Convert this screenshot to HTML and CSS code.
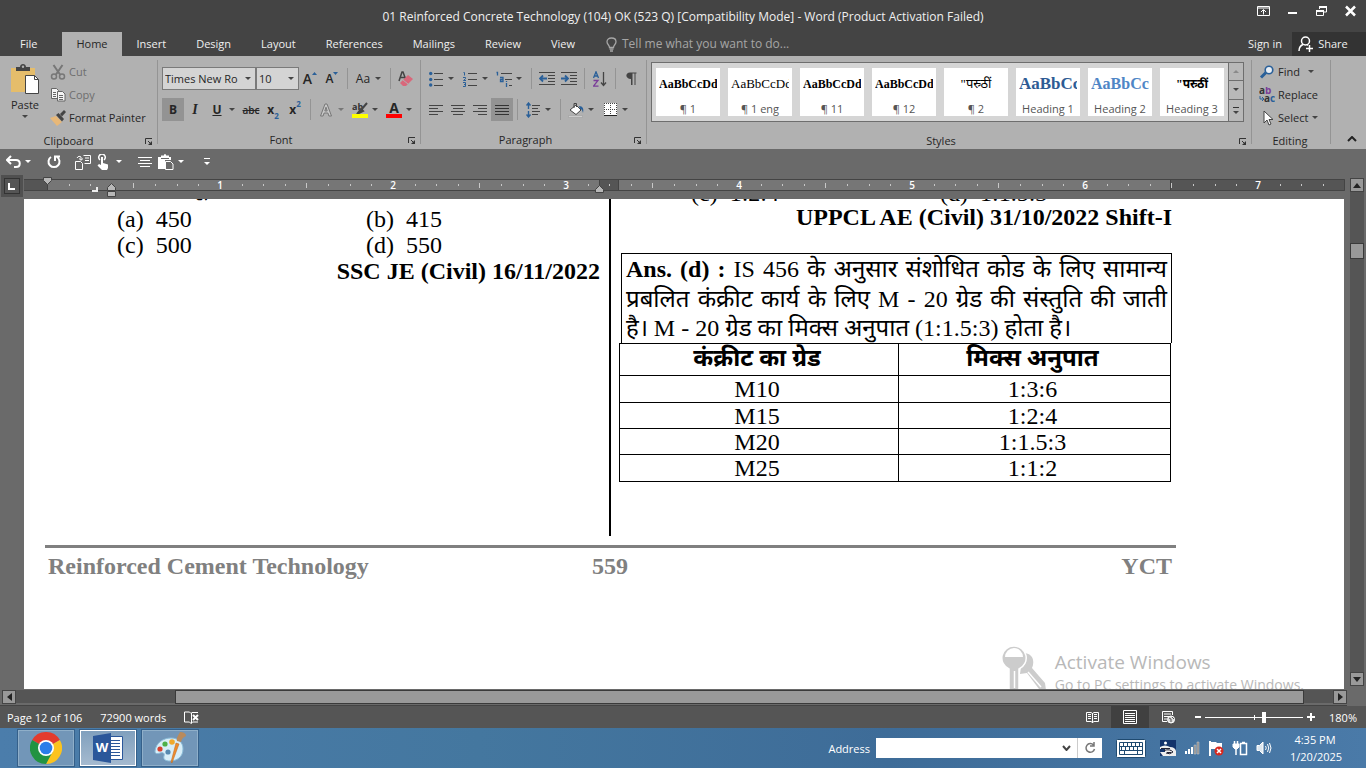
FILE: index.html
```html
<!DOCTYPE html>
<html lang="en">
  <head>
    <meta charset="UTF-8" />
    <meta name="viewport" content="width=device-width, initial-scale=1.0" />
    <title>01 Reinforced Concrete Technology (104) OK (523 Q) - Word</title>
    <link rel="stylesheet" href="styles.css">
  </head>
  <body>
    <header class="titlebar">
      <h1 class="title">01 Reinforced Concrete Technology (104) OK (523 Q) [Compatibility Mode] - Word (Product Activation Failed)</h1>
      <div class="window-controls">
        <button type="button" aria-label="Ribbon Display Options">
          <svg width="14" height="12" viewBox="0 0 14 12" fill="none" stroke="#fff"><path d="M.5 1.5h12v9H.5zM.5 3h12M6.500 9.500V5M4 7l2.500-2.500L9 7" /></svg>
        </button>
        <button type="button" aria-label="Minimize">
          <svg width="14" height="12" viewBox="0 0 14 12"><path d="M2 7h9v2H2z" fill="#fff" /></svg>
        </button>
        <button type="button" aria-label="Restore Down">
          <svg width="14" height="12" viewBox="0 0 14 12" fill="none" stroke="#fff"><path d="M4.500 4V2h7v5H9M1.500 5.500h7v5h-7z" /><path d="M4 2h8M1 6h8" stroke-width="2" /></svg>
        </button>
        <button type="button" aria-label="Close">
          <svg width="14" height="12" viewBox="0 0 14 12"><path d="M2 1.500l9 9M11 1.500l-9 9" stroke="#fff" stroke-width="2.500" /></svg>
        </button>
      </div>
    </header>

    <nav class="tabs">
      <a href="#" class="file">File</a>
      <a href="#" class="active">Home</a>
      <a href="#">Insert</a>
      <a href="#">Design</a>
      <a href="#">Layout</a>
      <a href="#">References</a>
      <a href="#">Mailings</a>
      <a href="#">Review</a>
      <a href="#">View</a>
      <button type="button" class="tell-me">
        <svg width="11" height="15" viewBox="0 0 11 15" fill="none" stroke="#a6a6a6" stroke-width="1.300"><path d="M3.500 10.500C3.500 8 1 7.500 1 4.800 1 2.500 3 1 5.500 1S10 2.500 10 4.800c0 2.700-2.500 3.200-2.500 5.700zM3.500 12.200h4M4 14h3" /></svg>
        Tell me what you want to do...
      </button>
      <div class="account">
        <a href="#">Sign in</a>
        <button type="button" class="share">
          <svg width="16" height="16" viewBox="0 0 16 16" fill="none" stroke="#fff" stroke-width="1.500"><circle cx="7.500" cy="5" r="4" /><path d="M1 15c0-3.500 1.500-5.500 4-6.500M9 8.500l1 .8M8 12.500h7M11.500 9v7" /></svg>
          Share
        </button>
      </div>
    </nav>

    <section class="ribbon">
      <div class="group clipboard">
        <div class="group-body">
          <button type="button" class="paste">
            <svg width="30" height="30" viewBox="0 0 30 30"><path d="M1 4h24v24H1z" fill="#e5bd6b" /><path d="M6 7V3h4c0-4 6-4 6 0h4v4z" fill="#444" /><circle cx="13" cy="2.800" r="1.200" fill="#b1b1b1" /><path d="M15.500 11.500h9l4 4v14h-13z" fill="#fff" stroke="#444" /><path d="M24.500 11.500v4h4" fill="none" stroke="#444" /></svg>
            Paste
            <i class="dd"></i>
          </button>
          <div class="commands">
            <button type="button" class="off">
              <svg width="16" height="16" viewBox="0 0 16 16" fill="none" stroke="#777"><path d="M3.500 1l6.500 9.500M12.500 1L6 10.500" stroke-width="2" /><circle cx="4" cy="12.500" r="2.500" stroke-width="1.500" /><circle cx="12" cy="12.500" r="2.500" stroke-width="1.500" /></svg>
              Cut
            </button>
            <button type="button" class="off">
              <svg width="16" height="16" viewBox="0 0 16 16" fill="#f4f4f4" stroke="#666"><path d="M1.500 1.500h5l2 2v8h-7z" /><path d="M3 5.500h3M3 7.500h3M3 9.500h3" /><path d="M7.500 4.500h5l2.500 2.500v7h-7.500z" /><path d="M9 8.500h4M9 10.500h4M9 12.500h4" /></svg>
              Copy
            </button>
            <button type="button">
              <svg width="16" height="16" viewBox="0 0 16 16"><path d="M0 8l6-2 6 6-5 4z" fill="#e8b878" /><path d="M6 5l2.500-2 5.500 6-2 2.500z" fill="#444" /><path d="M10 4l4-4 2 2-4 4.500z" fill="#444" /></svg>
              Format Painter
            </button>
          </div>
        </div>
        <div class="group-name">Clipboard <svg class="launcher" width="8" height="8" viewBox="0 0 8 8"><path d="M.5 6V.500H7M3 3l3 3" fill="none" stroke="#333" /><path d="M7 3v4H3z" fill="#333" /></svg></div>
      </div>

      <div class="group font">
        <div class="group-body rows">
          <div class="row">
            <label class="combo combo-font"><select aria-label="Font"><option>Times New Ro</option></select></label>
            <label class="combo combo-size"><select aria-label="Font Size"><option>10</option></select></label>
            <button type="button" class="tool" aria-label="Increase Font Size"><span class="grow">A</span><svg width="5" height="14" viewBox="0 0 5 14"><path d="M0 3l2.500-3L5 3z" fill="#2a6099" /></svg></button>
            <button type="button" class="tool" aria-label="Decrease Font Size"><span class="shrink">A</span><svg width="5" height="14" viewBox="0 0 5 14"><path d="M0 0l2.500 3L5 0z" fill="#2a6099" /></svg></button>
            <i class="sep"></i>
            <button type="button" class="tool case">Aa</button><i class="dd"></i>
            <i class="sep"></i>
            <button type="button" class="tool" aria-label="Clear All Formatting">
              <svg width="16" height="16" viewBox="0 0 16 16"><path d="M1 10l3-9h1l3 8M2.500 6.500H7" fill="none" stroke="#444" stroke-width="1.500" /><path d="M3 11l7-7 5 4-7 7-3 0-3-3z" fill="#d9687b" /><path d="M5 9l5 4" stroke="#b1b1b1" /></svg>
            </button>
          </div>
          <div class="row">
            <button type="button" class="tool on"><b>B</b></button>
            <button type="button" class="tool italic">I</button>
            <button type="button" class="tool underline">U</button><i class="dd"></i>
            <button type="button" class="tool strike">abc</button>
            <button type="button" class="tool script">x<sub>2</sub></button>
            <button type="button" class="tool script">x<sup>2</sup></button>
            <i class="sep"></i>
            <button type="button" class="tool" aria-label="Text Effects">
              <svg width="14" height="16" viewBox="0 0 14 16"><path d="M1.500 14L6 2h2l4.500 12h-2.600l-1-3H5.100l-1 3zM5.800 9h2.400L7 5.200z" fill="#c8c8c8" stroke="#777" /></svg>
            </button><i class="dd pale"></i>
            <button type="button" class="tool swatch yellow" aria-label="Text Highlight Color">
              <svg width="16" height="12" viewBox="0 0 16 12"><text x="0" y="8" font-size="9" font-weight="bold" fill="#333">ab</text><path d="M15 1l-6 7M9 7l-4 5 6-3z" stroke="#444" stroke-width="2" fill="#444" /></svg>
            </button><i class="dd"></i>
            <button type="button" class="tool swatch red"><b>A</b></button><i class="dd"></i>
          </div>
        </div>
        <div class="group-name">Font <svg class="launcher" width="8" height="8" viewBox="0 0 8 8"><path d="M.5 6V.500H7M3 3l3 3" fill="none" stroke="#333" /><path d="M7 3v4H3z" fill="#333" /></svg></div>
      </div>

      <div class="group paragraph">
        <div class="group-body rows">
          <div class="row">
            <button type="button" class="tool" aria-label="Bullets">
              <svg width="14" height="16" viewBox="0 0 14 16"><path d="M5 2.500h9M5 8.500h9M5 14.500h9" stroke="#444" /><g fill="#2a6099"><circle cx="1.700" cy="2.500" r="1.700" /><circle cx="1.700" cy="8.500" r="1.700" /><circle cx="1.700" cy="14" r="1.700" /></g></svg>
            </button><i class="dd"></i>
            <button type="button" class="tool" aria-label="Numbering">
              <svg width="14" height="16" viewBox="0 0 14 16"><path d="M5 2.500h9M5 8.500h9M5 14.500h9" stroke="#444" /><path d="M.5 1.500h1v3M0 6.500h2.500v1.200L.5 9.500h2.500M0 11.500h2.500v4H0M1 13.500h1.500" fill="none" stroke="#2a6099" /></svg>
            </button><i class="dd"></i>
            <button type="button" class="tool" aria-label="Multilevel List">
              <svg width="16" height="16" viewBox="0 0 16 16"><path d="M5 2.500h11M9 8.500h7M13 14.500h3" stroke="#444" /><path d="M.5 1.500h1v3M4 6.500h3v4H4.500v-2H7M10.500 10v1M10.500 12v4" fill="none" stroke="#2a6099" stroke-width="1.300" /></svg>
            </button><i class="dd"></i>
            <i class="sep"></i>
            <button type="button" class="tool" aria-label="Decrease Indent">
              <svg width="16" height="14" viewBox="0 0 16 14"><path d="M0 .500h16M9 3.500h7M9 6.500h7M9 9.500h7M0 12.500h16" stroke="#444" /><path d="M1 6.500h7M4 3.500l-3 3 3 3" fill="none" stroke="#2a6099" stroke-width="1.800" /></svg>
            </button>
            <button type="button" class="tool" aria-label="Increase Indent">
              <svg width="16" height="14" viewBox="0 0 16 14"><path d="M0 .500h16M9 3.500h7M9 6.500h7M9 9.500h7M0 12.500h16" stroke="#444" /><path d="M0 6.500h7M4 3.500l3 3-3 3" fill="none" stroke="#2a6099" stroke-width="1.800" /></svg>
            </button>
            <i class="sep"></i>
            <button type="button" class="tool" aria-label="Sort">
              <svg width="14" height="16" viewBox="0 0 14 16" fill="none"><path d="M.5 7L3 .800 5.500 7M1.500 5h3" stroke="#2a6099" stroke-width="1.300" /><path d="M.5 9.500H5L.5 15.200H5.500" stroke="#7a3d99" stroke-width="1.300" /><path d="M10.500 1v13M8 11.500l2.500 3 2.500-3" stroke="#444" stroke-width="1.300" /></svg>
            </button>
            <i class="sep"></i>
            <button type="button" class="tool" aria-label="Show paragraph marks">
              <svg width="11" height="13" viewBox="0 0 11 13"><path d="M5 7C-1 7-1 .500 4 .500h6.500v1H9.500V13h-1V1.500H6.500V13H5z" fill="#444" /></svg>
            </button>
          </div>
          <div class="row">
            <button type="button" class="tool" aria-label="Align Left"><svg width="14" height="12" viewBox="0 0 14 12"><path d="M0 1.500h14M0 4.500h9M0 7.500h14M0 10.500h9" stroke="#444" /></svg></button>
            <button type="button" class="tool" aria-label="Center"><svg width="14" height="12" viewBox="0 0 14 12"><path d="M0 1.500h14M2 4.500h10M0 7.500h14M2 10.500h10" stroke="#444" /></svg></button>
            <button type="button" class="tool" aria-label="Align Right"><svg width="14" height="12" viewBox="0 0 14 12"><path d="M0 1.500h14M5 4.500h9M0 7.500h14M5 10.500h9" stroke="#444" /></svg></button>
            <button type="button" class="tool on" aria-label="Justify"><svg width="14" height="12" viewBox="0 0 14 12"><path d="M0 1.500h14M0 4.500h14M0 7.500h14M0 10.500h14" stroke="#333" /></svg></button>
            <i class="sep"></i>
            <button type="button" class="tool" aria-label="Line Spacing">
              <svg width="14" height="16" viewBox="0 0 14 16" fill="none"><path d="M6 3.500h8M6 6.500h6M6 9.500h8M6 12.500h6" stroke="#444" /><path d="M2.500 1v6M.5 3.500l2-2.500 2 2.500M2.500 9v6M.5 12.500l2 2.500 2-2.500" stroke="#2a6099" stroke-width="1.400" /></svg>
            </button><i class="dd"></i>
            <i class="sep"></i>
            <button type="button" class="tool" aria-label="Shading">
              <svg width="16" height="16" viewBox="0 0 16 16"><path d="M2 8l6-5 5 5-5 4.500z" fill="#fff" stroke="#444" /><path d="M6 6V1.500h2.500V5" fill="none" stroke="#444" /><path d="M11 4c4 0 5 3 4 7-1-3-1-4-3-4z" fill="#2a6099" /><path d="M.5 13.500h14v2H.500z" fill="#ccc" stroke="#999" stroke-width=".500" /></svg>
            </button><i class="dd"></i>
            <button type="button" class="tool" aria-label="Borders">
              <svg width="13" height="13" viewBox="0 0 13 13"><path d="M0 0h13v13H0z" fill="#fff" /><path d="M0 .500h13M0 6.500h13M.5 0v12M6.500 0v12M12.500 0v12" stroke="#444" stroke-dasharray="1 1" /><path d="M0 12.500h13" stroke="#222" /></svg>
            </button><i class="dd"></i>
          </div>
        </div>
        <div class="group-name">Paragraph <svg class="launcher" width="8" height="8" viewBox="0 0 8 8"><path d="M.5 6V.500H7M3 3l3 3" fill="none" stroke="#333" /><path d="M7 3v4H3z" fill="#333" /></svg></div>
      </div>

      <div class="group styles">
        <div class="group-body gallery">
          <div class="gallery-items">
            <button type="button" class="style"><span class="preview bold">AaBbCcDd</span>¶ 1</button>
            <button type="button" class="style"><span class="preview">AaBbCcDd</span>¶ 1 eng</button>
            <button type="button" class="style"><span class="preview bold">AaBbCcDd</span>¶ 11</button>
            <button type="button" class="style"><span class="preview bold">AaBbCcDd</span>¶ 12</button>
            <button type="button" class="style"><span class="preview hindi">"पस्र्ठीं</span>¶ 2</button>
            <button type="button" class="style"><span class="preview heading1">AaBbCc</span>Heading 1</button>
            <button type="button" class="style"><span class="preview heading2">AaBbCc</span>Heading 2</button>
            <button type="button" class="style"><span class="preview hindi bold">"पस्र्ठीं</span>Heading 3</button>
          </div>
          <div class="gallery-nav">
            <button type="button" aria-label="Previous row"><i class="dd up"></i></button>
            <button type="button" aria-label="Next row"><i class="dd"></i></button>
            <button type="button" aria-label="More styles"><i class="dd more"></i></button>
          </div>
        </div>
        <div class="group-name">Styles <svg class="launcher" width="8" height="8" viewBox="0 0 8 8"><path d="M.5 6V.500H7M3 3l3 3" fill="none" stroke="#333" /><path d="M7 3v4H3z" fill="#333" /></svg></div>
      </div>

      <div class="group editing">
        <div class="group-body commands">
          <button type="button">
            <svg width="16" height="14" viewBox="0 0 16 14"><path d="M2 12.500l5-5" stroke="#2a6099" stroke-width="3" /><circle cx="10" cy="5" r="3.800" fill="#e8eef5" stroke="#2a6099" stroke-width="1.600" /></svg>
            Find <i class="dd find"></i>
          </button>
          <button type="button">
            <svg width="16" height="16" viewBox="0 0 16 16" font-size="10" font-weight="bold"><text x="0" y="7" fill="#333">a<tspan fill="#7a3d99">b</tspan></text><text x="5" y="15" fill="#333">a<tspan fill="#2a6099">c</tspan></text><path d="M1 9v3h3M3 10l2 2-2 2" fill="none" stroke="#2a6099" /></svg>
            Replace
          </button>
          <button type="button">
            <svg width="16" height="16" viewBox="0 0 16 16"><path d="M5 1v12l3-3 2 5 2-1-2-4.500h4z" fill="#fff" stroke="#444" /></svg>
            Select <i class="dd"></i>
          </button>
        </div>
        <div class="group-name">Editing</div>
      </div>
      <button type="button" class="collapse" aria-label="Collapse the Ribbon">
        <svg width="10" height="6" viewBox="0 0 10 6"><path d="M1 5l4-4 4 4" fill="none" stroke="#222" stroke-width="2" /></svg>
      </button>
    </section>

    <div class="quick">
      <button type="button" aria-label="Undo"><svg width="15" height="14" viewBox="0 0 15 14" fill="none" stroke="#fff" stroke-width="2"><path d="M1 5h9c5 0 5 7 0 7H8M5 1L1 5l4 4" /></svg></button><i class="dd"></i>
      <button type="button" class="repeat" aria-label="Repeat"><svg width="14" height="14" viewBox="0 0 14 14" fill="none" stroke="#fff" stroke-width="2"><path d="M4 2a5.500 5.500 0 1 0 6 0M8 6V1.500h5" /></svg></button>
      <button type="button" aria-label="Send to document"><svg width="16" height="16" viewBox="0 0 16 16" fill="none" stroke="#fff"><path d="M.5 7.500h5l2 2v6h-7zM8.500 1.500h7v8h-6M10 4h4M10 6.500h4M2 4c1-2 3-2 4-1v3M4 4.500l2 1.800 2-1.800" /></svg></button>
      <button type="button" aria-label="Touch/Mouse Mode"><svg width="14" height="16" viewBox="0 0 14 16"><path d="M3 6a3.300 3.300 0 1 1 4 0" fill="none" stroke="#fff" stroke-width="1.500" /><path d="M4 3h2v6l5 1.500V14l-1 2H5l-4.500-4.500L2 10l2 1z" fill="#fff" /></svg></button><i class="dd"></i>
      <button type="button" aria-label="Center"><svg width="14" height="12" viewBox="0 0 14 12"><path d="M0 1.500h14M2 4.500h10M0 7.500h14M2 10.500h10" stroke="#fff" /></svg></button>
      <button type="button" aria-label="Paste"><svg width="16" height="16" viewBox="0 0 16 16"><path d="M0 3h3V1.500h3C6-.500 8-.500 8 1.500h3V3h2v3H7v9H0z" fill="#fff" /><path d="M3 4.500h8" stroke="#666" /><path d="M7.500 7.500h5l2.500 2.500v5.500H7.500z" fill="#6a6a6a" stroke="#fff" /></svg></button><i class="dd"></i>
      <button type="button" aria-label="Customize Quick Access Toolbar"><i class="dd more"></i></button>
    </div>

    <main class="workspace">
      <div class="editor">
        <div class="ruler">
          <button type="button" class="tab-stop" aria-label="Left Tab"><svg width="8" height="7" viewBox="0 0 8 7"><path d="M1 0v6h6" fill="none" stroke="#fff" stroke-width="2" /></svg></button>
          <svg class="scale" width="100%" height="25">
            <defs>
              <pattern id="inch" x="23" y="0" width="173" height="25" patternUnits="userSpaceOnUse">
                <path d="M22.500 10v2M43.500 10v2M65.500 10v2M108.500 10v2M130.500 10v2M151.500 10v2M86.500 9v5" stroke="#c8c8c8" />
              </pattern>
            </defs>
            <path d="M0 5h2000v12H0z" fill="#555" />
            <path d="M23 5h552v12H23zM595 5h551v12H595z" fill="#767676" />
            <path d="M0 5.500h1320.500v11H0M23.500 5v12M575.500 5v12M594.500 5v12M1146.500 5v12" fill="none" stroke="#444" />
            <path d="M24 5h1296v12H24z" fill="url(#inch)" />
            <g class="numbers"><text x="196" y="15">1</text><text x="369" y="15">2</text><text x="542" y="15">3</text><text x="715" y="15">4</text><text x="888" y="15">5</text><text x="1061" y="15">6</text><text x="1234" y="15">7</text></g>
            <path d="M19.500 3.500h8v3l-4 4-4-4z" fill="#b8b8b8" stroke="#444" />
            <path d="M83.500 16.500v-3l4-4 4 4v3zM83.500 17.500h8v5h-8zM571.500 18.500v-3l4-4 4 4v3z" fill="#b8b8b8" stroke="#444" />
            <path d="M68 17h5v-4" fill="none" stroke="#eee" stroke-width="2" />
          </svg>
        </div>

        <div class="document">
          <article class="paper">
            <div class="columns">
              <section class="column left" lang="hi">
                <p class="question">सामर्थ्य न्यूनतम होनी चाहिए?</p>
                <div class="options">
                  <span><b>(a)</b>450</span><span><b>(b)</b>415</span>
                  <span><b>(c)</b>500</span><span><b>(d)</b>550</span>
                </div>
                <p class="exam">SSC JE (Civil) 16/11/2022</p>
              </section>
              <section class="column right" lang="hi">
                <div class="options">
                  <span><b>(c)</b>1:2:4</span><span><b>(d)</b>1:1.5:3</span>
                </div>
                <p class="exam">UPPCL AE (Civil) 31/10/2022 Shift-I</p>
                <div class="answer">
                  <p><strong>Ans. (d) :</strong> IS 456 के अनुसार संशोधित कोड के लिए सामान्य</p>
                  <p>प्रबलित कंक्रीट कार्य के लिए M - 20 ग्रेड की संस्तुति की जाती</p>
                  <p class="last">है। M - 20 ग्रेड का मिक्स अनुपात (1:1.5:3) होता है।</p>
                </div>
                <table>
                  <thead>
                    <tr><th class="grade">कंक्रीट का ग्रेड</th><th>मिक्स अनुपात</th></tr>
                  </thead>
                  <tbody>
                    <tr><td>M10</td><td>1:3:6</td></tr>
                    <tr><td>M15</td><td>1:2:4</td></tr>
                    <tr><td>M20</td><td>1:1.5:3</td></tr>
                    <tr><td>M25</td><td>1:1:2</td></tr>
                  </tbody>
                </table>
              </section>
            </div>
            <footer class="page-footer">
              <span>Reinforced Cement Technology</span><span>559</span><span>YCT</span>
            </footer>
          </article>
          <div class="watermark">
            <svg width="46" height="51" viewBox="0 0 46 51"><path d="M22 8c10 0 12 8 9 15l13 15 1 7-7-1-12-16-7 1z" fill="#ccc" /><path d="M27 27l13 15" stroke="#fff" stroke-width="1.500" /><path d="M13 1a12 12 0 0 1 5 23v20l-5 4-5-4V24A12 12 0 0 1 13 1z" fill="#ccc" stroke="#fff" stroke-width="1.500" /><path d="M4 12a9 9 0 0 1 18 0z" fill="#fff" /><path d="M13.500 26v17" stroke="#fff" stroke-width="1.500" /></svg>
            <div>
              <p class="big">Activate Windows</p>
              <p>Go to PC settings to activate Windows.</p>
            </div>
          </div>
        </div>

        <div class="hscroll">
          <button type="button" class="arrow" aria-label="Scroll left"><svg width="5" height="8" viewBox="0 0 5 8"><path d="M5 0v8L0 4z" fill="#222" /></svg></button>
          <div class="track"><div class="thumb"></div></div>
          <button type="button" class="arrow" aria-label="Scroll right"><svg width="5" height="8" viewBox="0 0 5 8"><path d="M0 0v8l5-4z" fill="#222" /></svg></button>
        </div>
      </div>
      <div class="vscroll">
        <button type="button" class="arrow" aria-label="Scroll up"><svg width="8" height="5" viewBox="0 0 8 5"><path d="M0 5h8L4 0z" fill="#222" /></svg></button>
        <div class="track"><div class="thumb"></div></div>
        <button type="button" class="arrow" aria-label="Scroll down"><svg width="8" height="5" viewBox="0 0 8 5"><path d="M0 0h8L4 5z" fill="#222" /></svg></button>
      </div>
    </main>

    <div class="statusbar">
      <span>Page 12 of 106</span>
      <span>72900 words</span>
      <svg width="15" height="13" viewBox="0 0 15 13" fill="none" stroke="#fff"><path d="M7 2.500L5.500 1H.500v10h5L7 12.500 8.500 11H14M7.500 1.500v11M8 1.500h6" /><path d="M9 4l5 5M14 4L9 9" stroke-width="2" /></svg>
      <div class="views">
        <button type="button" aria-label="Read Mode"><svg width="13" height="13" viewBox="0 0 13 13" fill="none" stroke="#fff"><path d="M.5 1.500h4.500l1.500 1 1.500-1h4.500v9H8l-1.500 1-1.500-1H.500zM6.500 2v10M2 3.500h3M2 5.500h3M2 7.500h3M8 3.500h3M8 5.500h3M8 7.500h3" /></svg></button>
        <button type="button" class="on" aria-label="Print Layout"><svg width="14" height="14" viewBox="0 0 14 14" fill="none" stroke="#fff"><path d="M.5.500h13v13H.500zM2 3.500h10M2 5.500h10M2 7.500h10M2 9.500h10M2 11.500h10" /></svg></button>
        <button type="button" aria-label="Web Layout"><svg width="14" height="14" viewBox="0 0 14 14" fill="none" stroke="#fff"><path d="M6 11.500H1.500v-10h10V5M3 4h7M3 6.500h5M3 9h3" /><circle cx="10" cy="9.500" r="3.500" fill="#ddd" /><path d="M8 8l2 1v3M11 7l2 2" stroke="#555" /></svg></button>
      </div>
      <div class="zoom">
        <button type="button" aria-label="Zoom Out"><svg width="6" height="8" viewBox="0 0 6 8"><path d="M0 3h6v2H0z" fill="#fff" /></svg></button>
        <input type="range" min="0" max="100" value="61" aria-label="Zoom" />
        <button type="button" aria-label="Zoom In"><svg width="8" height="8" viewBox="0 0 8 8"><path d="M3 0h2v3h3v2H5v3H3V5H0V3h3z" fill="#fff" /></svg></button>
      </div>
      <span class="percent">180%</span>
    </div>

    <div class="taskbar">
      <div class="apps">
        <button type="button" aria-label="Google Chrome">
          <svg width="32" height="32" viewBox="0 0 32 32"><path d="M16 16L2.140 8A16 16 0 0 1 29.860 8z" fill="#e33b2e" /><path d="M16 16L29.860 8A16 16 0 0 1 16 32l6.100-12.500z" fill="#fcc31e" /><path d="M2.140 8A16 16 0 0 0 16 32l6.500-12L16 16z" fill="#229342" /><path d="M2.140 8H29.860l-13.860 1z" fill="#e33b2e" /><circle cx="16" cy="16" r="8" fill="#fff" /><circle cx="16" cy="16" r="6.300" fill="#2b7de9" /></svg>
        </button>
        <button type="button" class="current" aria-label="Word">
          <svg width="32" height="32" viewBox="0 0 32 32"><path d="M16 4.500h14.500v23H16z" fill="#fff" stroke="#2b579a" /><path d="M19 8.500h9M19 11.500h9M19 14.500h9M19 17.500h9M19 20.500h9M19 23.500h9" stroke="#2b579a" /><path d="M1 4l18-3v30L1 28z" fill="#2b579a" /><text x="10" y="20" text-anchor="middle" font-size="13" font-weight="bold" fill="#fff">W</text></svg>
        </button>
        <button type="button" aria-label="Paint">
          <svg width="32" height="32" viewBox="0 0 32 32"><path d="M1 19C2 11 9 6 17 6c8 0 12 5 12 11 0 8-6 12-13 12-5 0-7-2-6-5s-1-4-4-3-5 1-5-2z" fill="#d8eef8" stroke="#8bbcd8" /><circle cx="6" cy="17" r="2.600" fill="#d9412f" /><circle cx="11" cy="12" r="2.600" fill="#4fb04a" /><circle cx="18" cy="10" r="2.800" fill="#f0a92c" /><circle cx="14" cy="20" r="2.600" fill="#5689b0" /><path d="M17 30l5-19 3 1-7 19z" fill="#ef8b2c" stroke="#b9661c" stroke-width=".500" /><path d="M23 9c-1-4 2-6 3-9 3 0 6 1 6 4-2 1-4 2-5 6z" fill="#b98a5c" /></svg>
        </button>
      </div>
      <form class="address">
        <label for="address">Address</label>
        <div class="address-box">
          <input type="text" id="address" />
          <svg width="9" height="6" viewBox="0 0 9 6"><path d="M1 1l3.500 4L8 1" fill="none" stroke="#444" stroke-width="2" /></svg>
          <button type="button" aria-label="Refresh"><svg width="12" height="12" viewBox="0 0 12 12"><path d="M9.500 3A4.300 4.300 0 1 0 10.500 7M10 0v4H6" fill="none" stroke="#777" stroke-width="1.500" /></svg></button>
        </div>
      </form>
      <div class="tray">
        <svg class="keyboard" width="30" height="19" viewBox="0 0 30 19"><rect x=".500" y=".500" width="29" height="18" rx="1" fill="#fff" stroke="#1f4a70" /><path d="M3.500 3.500h23v12h-23zM3.500 7.500h23M3.500 11.500h23M7.500 3.500v4M11.500 3.500v4M15.500 3.500v4M19.500 3.500v4M23.500 3.500v4M5.500 7.500v4M9.500 7.500v4M13.500 7.500v4M17.500 7.500v4M21.500 7.500v4M8.500 11.500v4M21.500 11.500v4" fill="none" stroke="#1f4a70" /></svg>
        <svg width="16" height="16" viewBox="0 0 16 16"><path d="M0 0h16v16H0z" fill="#12336b" /><circle cx="5.500" cy="3" r="1.500" fill="#fff" /><path d="M0 7q5-3 10 0 5 0 6 4v5H3L0 12h5V9H0z" fill="#eee" /><path d="M1 8.500h9M4 10.500q6-2 9 1.500-3 3-7 1M7 12.500h4" stroke="#223" fill="none" /></svg>
        <svg width="16" height="16" viewBox="0 0 16 16"><path d="M1 11h2v3H1zM4 9h2v5H4zM7 7h2v7H7z" fill="#fff" /><path d="M10 5h2v9h-2zM13 2h2v12h-2z" fill="#8c8c8c" stroke="#ccc" stroke-width=".500" /></svg>
        <svg width="16" height="16" viewBox="0 0 16 16"><path d="M2 1v15" stroke="#fff" stroke-width="2" /><path d="M3 2h5l1 1h5v7H8L7 9H3z" fill="#fff" /><circle cx="11" cy="11" r="4.500" fill="#d8281e" /><path d="M9 9l4 4M13 9l-4 4" stroke="#fff" stroke-width="1.500" /></svg>
        <svg width="16" height="16" viewBox="0 0 16 16" fill="none" stroke="#fff"><path d="M8.500 3.500h6v11h-6zM10 2.500h3" stroke-width="1.500" /><path d="M2.500 1v3M5.500 1v3M4 8v7" stroke-width="1.500" /><path d="M1 4h6v3L5 9H3L1 7z" fill="#fff" /></svg>
        <svg width="16" height="16" viewBox="0 0 16 16" fill="none" stroke="#fff"><path d="M1 5.500h2.500L7 2v12l-3.500-3.500H1z" fill="#dce6ee" /><path d="M9.500 6q1.500 2 0 4M11.500 4q2.500 4 0 8M13.500 3q3 5 0 10" /></svg>
      </div>
      <time class="clock">4:35 PM<br>1/20/2025</time>
    </div>
  </body>
</html>
```

FILE: styles.css
```css
* {
  box-sizing: border-box;
}
body {
  margin: 0;
  height: 100vh;
  display: flex;
  flex-direction: column;
  overflow: hidden;
  background: #6a6a6a;
  font-family: 'Open Sans', 'Noto Sans', sans-serif;
  font-size: 11px;
  color: #262626;
}
p {
  margin: 0;
}
button {
  margin: 0;
  padding: 0;
  border: 0;
  background: none;
  font: inherit;
  color: inherit;
  display: flex;
  align-items: center;
  justify-content: center;
}
a {
  color: inherit;
  text-decoration: none;
}
svg {
  flex: none;
}

/* title bar and tabs */
.titlebar {
  display: grid;
  grid-template-columns: 1fr auto 1fr;
  height: 32px;
  background: #444;
  color: #f0f0f0;
}
.title {
  grid-column: 2;
  margin: 0;
  font-size: 12px;
  font-weight: normal;
  line-height: 34px;
}
.window-controls {
  display: flex;
  justify-content: flex-end;
  align-items: flex-start;
  gap: 15px;
  padding: 5px 8px 0 0;
}
.tabs {
  display: flex;
  height: 24px;
  background: #444;
  color: #f0f0f0;
  line-height: 24px;
}
.tabs a {
  padding: 0 15px;
}
.tabs .file {
  padding: 0 25px 0 20px;
}
.tabs .active {
  padding: 0 14px;
  background: #b1b1b1;
  color: #262626;
}
.tell-me {
  gap: 5px;
  margin-left: 16px;
  color: #a6a6a6;
  font-size: 12px;
}
.account {
  display: flex;
  margin-left: auto;
}
.tabs .account a {
  padding: 0 10px;
}
.share {
  gap: 4px;
  width: 74px;
  padding-right: 12px;
  background: #333;
}

/* ribbon */
.ribbon {
  display: flex;
  height: 93px;
  padding: 4px 0 5px;
  background: #b1b1b1;
}
.group {
  display: flex;
  flex-direction: column;
  border-right: 1px solid #949494;
}
.group-body {
  flex: 1;
}
.group-name {
  position: relative;
  height: 16px;
  padding-right: 20px;
  text-align: center;
  line-height: 24px;
}
.launcher {
  position: absolute;
  right: 4px;
  top: 9px;
}
.clipboard {
  width: 158px;
}
.clipboard .group-body {
  display: flex;
}
.paste {
  flex-direction: column;
  justify-content: flex-start;
  gap: 3px;
  width: 50px;
  padding-top: 4px;
}
.commands {
  display: flex;
  flex-direction: column;
  align-items: flex-start;
}
.commands button {
  gap: 3px;
  height: 23px;
}
.commands .off {
  color: #6e6e6e;
}
.font {
  width: 263px;
  padding-left: 4px;
}
.paragraph {
  width: 226px;
  padding-left: 4px;
}
.rows {
  display: flex;
  flex-direction: column;
  gap: 8px;
  padding-top: 7px;
}
.row {
  display: flex;
  align-items: center;
  height: 23px;
}
.tool {
  width: 22px;
  height: 23px;
}
.tool.on {
  background: #939393;
}
.sep {
  width: 1px;
  height: 21px;
  margin: 0 4px;
  background: #949494;
}
.dd {
  display: flex;
  justify-content: center;
  width: 8px;
  margin-right: 4px;
}
.dd::after {
  content: '';
  border: 3px solid transparent;
  border-top-color: #444;
  border-bottom: 0;
}
.dd.pale::after {
  border-top-color: #777;
}
.paste .dd,
.gallery-nav .dd {
  margin: 0;
}
.dd.find {
  margin-left: 4px;
}
.dd.up::after {
  border-top: 0;
  border-bottom: 3px solid #8a8a8a;
}
.dd.more {
  flex-direction: column;
  align-items: center;
  gap: 3px;
}
.dd.more::before {
  content: '';
  width: 6px;
  height: 1px;
  background: #333;
}
.combo {
  position: relative;
  height: 23px;
}
.combo::after {
  content: '';
  position: absolute;
  right: 5px;
  top: 10px;
  border: 3px solid transparent;
  border-top-color: #444;
  border-bottom: 0;
}
.combo select {
  appearance: none;
  width: 100%;
  height: 23px;
  padding: 0 0 0 2px;
  border: 1px solid #7a7a7a;
  border-radius: 0;
  background: #d4d4d4;
  font: inherit;
  color: #262626;
}
.combo-font {
  width: 94px;
}
.combo-size {
  width: 43px;
}
.grow {
  font-size: 14px;
  font-weight: 600;
}
.shrink {
  font-size: 12px;
  font-weight: 600;
}
.case {
  font-size: 12px;
}
.tool b {
  font-size: 12px;
}
.italic {
  font: italic bold 14px 'Liberation Serif', serif;
}
.underline {
  font-size: 12px;
  font-weight: bold;
  text-decoration: underline;
}
.strike {
  font-size: 10px;
  font-weight: 600;
  text-decoration: line-through;
}
.script {
  font-size: 12px;
  font-weight: bold;
}
.script sub,
.script sup {
  align-self: flex-end;
  font-size: 8px;
  color: #2a6099;
}
.script sup {
  align-self: flex-start;
}
.swatch {
  flex-direction: column;
}
.swatch::after {
  content: '';
  width: 16px;
  height: 4px;
}
.swatch b {
  height: 12px;
  font-size: 14px;
  line-height: 12px;
}
.yellow::after {
  background: #ff0;
}
.red::after {
  background: #f00;
}

/* styles gallery */
.styles {
  flex: 1;
  padding-left: 4px;
}
.gallery {
  display: flex;
  flex: none;
  height: 60px;
  margin: 2px 7px 7px 0;
  border: 1px solid #6e6e6e;
  background: #d5d5d5;
}
.styles .group-name {
  margin-top: auto;
}
.gallery-items {
  display: flex;
  flex: 1;
  gap: 8px;
  padding: 5px 4px;
  overflow: hidden;
}
.style {
  flex: none;
  flex-direction: column;
  justify-content: flex-end;
  width: 64px;
  height: 48px;
  background: #fff;
  color: #555;
  line-height: 14px;
}
.preview {
  width: 58px;
  height: 24px;
  margin-bottom: 6px;
  overflow: hidden;
  text-align: left;
  white-space: nowrap;
  font: 13px/24px 'Liberation Serif', 'Noto Sans Devanagari', serif;
  color: #000;
}
.preview.bold {
  font-size: 12px;
  font-weight: bold;
}
.preview.heading1 {
  font-size: 17px;
  font-weight: bold;
  color: #2e5b94;
}
.preview.heading2 {
  font-size: 16px;
  font-weight: bold;
  color: #4f86c6;
}
.preview.hindi {
  text-align: center;
}
.gallery-nav {
  display: grid;
  width: 15px;
  border-left: 1px solid #6e6e6e;
  background: #b8b8b8;
}
.gallery-nav button + button {
  border-top: 1px solid #6e6e6e;
}
.editing {
  width: 79px;
}
.editing .group-body {
  padding-left: 7px;
}
.editing .group-name {
  padding-right: 2px;
}
.collapse {
  align-self: flex-end;
  width: 35px;
  height: 17px;
  padding: 6px 0 0 6px;
}

/* quick access toolbar */
.quick {
  display: flex;
  align-items: center;
  gap: 3px;
  height: 25px;
  padding-left: 4px;
}
.quick button {
  width: 18px;
}
.quick .dd {
  width: 6px;
  margin-right: 11px;
}
.quick .dd::after {
  border-top-color: #fff;
}
.quick .dd::before {
  background: #fff;
}
.quick .repeat {
  margin-right: 8px;
}
.quick .more {
  margin: 0;
}

/* document */
.workspace {
  flex: 1;
  display: flex;
  min-height: 0;
}
.editor {
  flex: 1;
  display: flex;
  flex-direction: column;
  min-width: 0;
}
.ruler {
  display: flex;
  height: 25px;
}
.scale {
  flex: 1;
  min-width: 0;
}
.numbers {
  font-size: 10px;
  font-weight: 600;
  fill: #fff;
  text-anchor: middle;
}
.tab-stop {
  flex: none;
  width: 16px;
  height: 16px;
  margin: 4px 4px 0;
  border: 1px solid #333;
  background: #555;
  outline: 3px solid #505050;
}
.document {
  position: relative;
  flex: 1;
  min-height: 0;
  margin: 0 1px 0 24px;
  overflow: hidden;
  background: #fff;
  color: #000;
}
.paper {
  width: 1131px;
  margin-left: 21px;
  font-family: 'Liberation Serif', 'Noto Sans Devanagari', serif;
  font-size: 24px;
}
.columns {
  display: grid;
  grid-template-columns: 564px 1fr;
  height: 356px;
  margin-top: -19px;
}
.left {
  padding-right: 9px;
  line-height: 26px;
}
.right {
  border-left: 2px solid #000;
  padding: 1px 4px 0 8px;
  line-height: 24px;
}
.question {
  height: 26px;
  padding-left: 72px;
  line-height: 12px;
  white-space: nowrap;
}
.options {
  display: grid;
  grid-template-columns: 249px 1fr;
  padding-left: 72px;
}
.options span {
  display: flex;
  gap: 12px;
}
.options b {
  font-weight: normal;
}
.exam {
  font-weight: bold;
  text-align: right;
}
.answer {
  margin: 24px 0 0 2px;
  padding: 0 4px;
  border: 1px solid #000;
  border-bottom: 0;
}
.answer p {
  height: 29px;
  line-height: 29px;
  text-align-last: justify;
  white-space: nowrap;
}
.answer p:first-child {
  height: 31px;
  line-height: 31px;
}
.answer .last {
  text-align-last: left;
}
table {
  width: 552px;
  border-collapse: collapse;
  table-layout: fixed;
}
th,
td {
  height: 26px;
  padding: 0 4px 0 0;
  border: 1px solid #000;
  text-align: center;
  line-height: 24px;
}
tr:nth-child(3n + 1) td {
  height: 27px;
}
th {
  height: 32px;
  padding-bottom: 4px;
}
.grade {
  width: 279px;
}
.page-footer {
  display: grid;
  grid-template-columns: 1fr auto 1fr;
  margin-top: 9px;
  padding: 5px 4px 0 3px;
  border-top: 3px solid #808080;
  color: #808080;
  font-weight: bold;
  line-height: 26px;
}
.page-footer span:last-child {
  text-align: right;
}
.watermark {
  position: absolute;
  right: 36px;
  bottom: -7px;
  display: flex;
  align-items: flex-end;
  gap: 8px;
  color: #b8b8b8;
  font-size: 14px;
  line-height: 22px;
}
.watermark div {
  padding-right: 4px;
}
.watermark .big {
  font-size: 19px;
  line-height: 24px;
}

/* scrollbars */
.hscroll {
  display: flex;
  height: 17px;
  margin-right: -2px;
  padding: 1px 0 2px 2px;
  border-bottom: 1px solid #444;
}
.vscroll {
  display: flex;
  flex-direction: column;
  width: 21px;
  padding: 4px 2px 20px 5px;
}
.arrow {
  flex: none;
  width: 14px;
  height: 14px;
  border: 1px solid #444;
  background: #999;
}
.track {
  flex: 1;
  background: #555;
}
.thumb {
  border: 1px solid #3a3a3a;
  background: #999;
}
.hscroll .thumb {
  height: 14px;
  margin: 0 29px 0 159px;
}
.vscroll .thumb {
  height: 16px;
  margin-top: 51px;
}

/* status bar */
.statusbar {
  display: flex;
  align-items: center;
  gap: 18px;
  height: 22px;
  padding: 0 9px 0 7px;
  background: #555;
  color: #fff;
}
.views {
  display: flex;
  margin-left: auto;
  margin-right: -10px;
}
.views button {
  width: 38px;
  height: 22px;
}
.views .on {
  background: #404040;
}
.zoom {
  display: flex;
  align-items: center;
  gap: 4px;
}
.zoom input {
  appearance: none;
  width: 98px;
  height: 12px;
  margin: 0;
  background: linear-gradient(#fff, #fff) center / 100% 1px no-repeat,
    linear-gradient(#fff, #fff) center / 1px 5px no-repeat;
}
.zoom input::-webkit-slider-thumb {
  appearance: none;
  width: 4px;
  height: 11px;
  background: #fff;
}
.percent {
  margin-left: -4px;
}

/* taskbar */
.taskbar {
  display: flex;
  align-items: center;
  height: 40px;
  background: linear-gradient(90deg, #4b7dab, #44779f 35%, #3e6c98 65%, #4a7aa8);
  color: #fff;
}
.apps {
  display: flex;
  flex: 1;
  gap: 4px;
  padding-left: 17px;
}
.apps button {
  width: 58px;
  height: 38px;
  border: 1px solid #9fbad1;
  outline: 1px solid #35608a;
  outline-offset: -1px;
  background: #7296b8;
  box-shadow: inset 0 0 0 1px #8fafc9;
}
.apps .current {
  border-color: #fff;
  background: linear-gradient(#7f9fbd, #a6bbd0);
  box-shadow: inset 0 0 0 1px #fff;
}
.address {
  display: flex;
  align-items: center;
  gap: 6px;
}
.address-box {
  display: flex;
  align-items: center;
  width: 226px;
  height: 20px;
  background: #fff;
}
.address input {
  flex: 1;
  min-width: 0;
  height: 20px;
  border: 0;
  background: none;
}
.address-box button {
  width: 25px;
  height: 20px;
  margin-left: 6px;
  border-left: 1px solid #ccc;
}
.tray {
  display: flex;
  align-items: center;
  gap: 8px;
  padding: 0 18px 0 14px;
}
.keyboard {
  margin-right: 6px;
}
.clock {
  width: 76px;
  padding-right: 26px;
  text-align: center;
  line-height: 17px;
}
```
